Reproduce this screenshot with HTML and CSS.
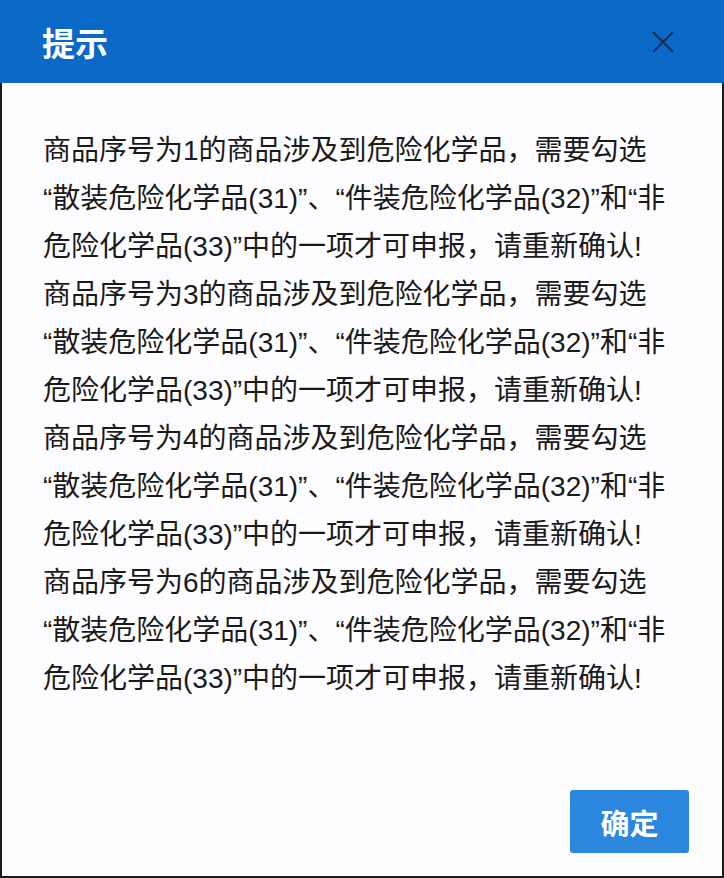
FILE: index.html
```html
<!DOCTYPE html>
<html lang="zh-CN">
<head>
    <meta charset="UTF-8">
    <meta name="viewport" content="width=device-width, initial-scale=1.0">
    <title>提示</title>
    <link rel="stylesheet" href="styles.css">
</head>
<body>

    <div class="dialog">
        <!-- Header -->
        <div class="dialog-header">
            <h1 class="dialog-title">提示</h1>
            <button class="dialog-close" aria-label="关闭">
                <svg width="24" height="24" viewBox="0 0 24 24">
                    <path d="M2 2 L22 22 M22 2 L2 22" stroke="currentColor" stroke-width="2" fill="none"/>
                </svg>
            </button>
        </div>

        <!-- Messages -->
        <div class="dialog-body">
            <p class="message">商品序号为1的商品涉及到危险化学品，需要勾选<br>“散装危险化学品(31)”、“件装危险化学品(32)”和“非<br>危险化学品(33)”中的一项才可申报，请重新确认!</p>
            <p class="message">商品序号为3的商品涉及到危险化学品，需要勾选<br>“散装危险化学品(31)”、“件装危险化学品(32)”和“非<br>危险化学品(33)”中的一项才可申报，请重新确认!</p>
            <p class="message">商品序号为4的商品涉及到危险化学品，需要勾选<br>“散装危险化学品(31)”、“件装危险化学品(32)”和“非<br>危险化学品(33)”中的一项才可申报，请重新确认!</p>
            <p class="message">商品序号为6的商品涉及到危险化学品，需要勾选<br>“散装危险化学品(31)”、“件装危险化学品(32)”和“非<br>危险化学品(33)”中的一项才可申报，请重新确认!</p>
        </div>

        <!-- Footer -->
        <div class="dialog-footer">
            <button class="confirm-btn">确定</button>
        </div>
    </div>

</body>
</html>
```

FILE: styles.css
```css
html, body {
    margin: 0;
    padding: 0;
    height: 100%;
}

body {
    font-family: "Liberation Sans", "Noto Sans CJK SC", sans-serif;
    background-color: #fdfdff;
    color: #1a1a1a;
}

/* Dialog */
.dialog {
    box-sizing: border-box;
    height: 100%;
    display: flex;
    flex-direction: column;
    border: 2px solid #1c1c1c;
    border-top: none;
    background-color: #fdfdff;
}

.dialog-header {
    height: 83px;
    margin: 0 -2px;
    display: flex;
    align-items: center;
    justify-content: space-between;
    padding: 0 49px 0 42px;
    background-color: #0a68c6;
}

.dialog-title {
    margin: 0;
    font-size: 33px;
    font-weight: bold;
    color: #fff;
    font-family: "Noto Sans CJK SC", sans-serif;
}

.dialog-close {
    padding: 0;
    border: none;
    background: none;
    color: #172f52;
    cursor: pointer;
    display: flex;
}

.dialog-body {
    flex: 1;
    padding: 44px 20px 0 41px;
}

.message {
    margin: 0;
    font-size: 28px;
    line-height: 48px;
    white-space: nowrap;
}

.dialog-footer {
    display: flex;
    justify-content: flex-end;
    padding: 0 33px 23px 0;
}

/* Confirm Button */
.confirm-btn {
    width: 119px;
    height: 63px;
    border: none;
    border-radius: 3px;
    background-color: #2b87de;
    color: #fff;
    font-family: "Noto Sans CJK SC", sans-serif;
    font-size: 29px;
    font-weight: bold;
    cursor: pointer;
}

.confirm-btn:hover {
    background-color: #1f78cc;
}
```
